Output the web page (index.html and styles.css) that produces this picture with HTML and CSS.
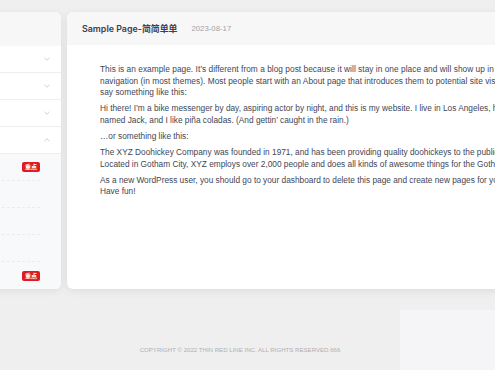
FILE: index.html
```html
<!DOCTYPE html>
<html lang="en">
<head>
<meta charset="utf-8">
<title>Sample Page</title>
<link rel="stylesheet" href="styles.css">
</head>
<body>
<div class="layout">
  <aside class="side">
    <div class="side-head"></div>
    <div class="menu-row"><svg class="chev" viewBox="0 0 6 4"><polyline points="0.5,0.8 3,3.2 5.5,0.8"/></svg></div>
    <div class="menu-row"><svg class="chev" viewBox="0 0 6 4"><polyline points="0.5,0.8 3,3.2 5.5,0.8"/></svg></div>
    <div class="menu-row"><svg class="chev" viewBox="0 0 6 4"><polyline points="0.5,0.8 3,3.2 5.5,0.8"/></svg></div>
    <div class="menu-row"><svg class="chev" viewBox="0 0 6 4"><polyline points="0.5,3.2 3,0.8 5.5,3.2"/></svg></div>
    <div class="submenu">
      <div class="sub-item"><span class="badge">重点</span></div>
      <div class="sub-item"></div>
      <div class="sub-item"></div>
      <div class="sub-item"></div>
      <div class="sub-item"><span class="badge">重点</span></div>
    </div>
  </aside>
  <main class="main">
    <div class="main-head">
      <h1 class="title">Sample Page-简简单单</h1>
      <span class="date">2023-08-17</span>
    </div>
    <div class="content">
      <p class="lead">This is an example page. It’s different from a blog post because it will stay in one place and will show up in your site navigation (in most themes). Most people start with an About page that introduces them to potential site visitors. It might say something like this:</p>
      <p>Hi there! I’m a bike messenger by day, aspiring actor by night, and this is my website. I live in Los Angeles, have a great dog named Jack, and I like piña coladas. (And gettin’ caught in the rain.)</p>
      <p>…or something like this:</p>
      <p>The XYZ Doohickey Company was founded in 1971, and has been providing quality doohickeys to the public ever since. Located in Gotham City, XYZ employs over 2,000 people and does all kinds of awesome things for the Gotham community.</p>
      <p>As a new WordPress user, you should go to your dashboard to delete this page and create new pages for your content. Have fun!</p>
    </div>
  </main>
</div>
<footer class="footer">COPYRIGHT © 2022 THIN RED LINE INC. ALL RIGHTS RESERVED.666</footer>
<div class="widget"></div>
</body>
</html>
```
FILE: styles.css
```css
html, body {
  margin: 0;
  padding: 0;
}
body {
  background: #efefef;
  font-family: "Liberation Sans", Arial, "Noto Sans CJK SC", sans-serif;
  overflow: hidden;
  height: 370px;
}
.layout {
  display: flex;
  justify-content: center;
  gap: 6px;
  padding-top: 12px;
}
.side {
  flex: 0 0 200px;
  width: 200px;
  background: #fff;
  border-radius: 6px;
  overflow: hidden;
  box-shadow: 0 2px 8px rgba(0, 0, 0, 0.07);
  display: flex;
  flex-direction: column;
}
.side-head {
  height: 34px;
  background: #f7f7f8;
}
.menu-row {
  height: 27px;
  box-sizing: border-box;
  border-bottom: 1px solid #eeeeee;
  display: flex;
  align-items: center;
  justify-content: flex-end;
  padding-right: 11px;
}
.chev {
  width: 6px;
  height: 4px;
  fill: none;
  stroke: #c4c4c4;
  stroke-width: 0.8;
}
.submenu {
  background: #f8f9fb;
  padding: 0 21px 0 0;
  flex: 1;
}
.sub-item {
  height: 27px;
  box-sizing: border-box;
  border-bottom: 1px dashed #ebecef;
  display: flex;
  align-items: center;
  justify-content: flex-end;
}
.sub-item:last-child {
  border-bottom: none;
}
.badge {
  background: #dc1c22;
  color: #fff;
  font-family: "Noto Sans CJK SC", sans-serif;
  font-size: 6px;
  font-weight: 700;
  line-height: 10px;
  height: 10px;
  padding: 0 3px;
  border-radius: 2px;
}
.main {
  flex: 0 0 567px;
  width: 567px;
  background: #fff;
  border-radius: 6px;
  overflow: hidden;
  box-shadow: 0 2px 8px rgba(0, 0, 0, 0.08);
}
.main-head {
  height: 33px;
  background: #f7f7f8;
  display: flex;
  align-items: center;
  padding-left: 15px;
  gap: 14px;
}
.title {
  margin: 0;
  font-family: Inter, "Noto Sans CJK SC", sans-serif;
  font-size: 8.9px;
  font-weight: 600;
  color: #3b4050;
}
.date {
  font-size: 7.8px;
  color: #a3a3a8;
}
.content {
  width: 456.5px;
  padding: 19px 0 0 33px;
  font-size: 8.3px;
  line-height: 11.6px;
  color: #414656;
}
.content p {
  margin: 0 0 4.5px;
}
.content .lead {
  letter-spacing: 0.04px;
}
.footer {
  text-align: center;
  padding: 57px 15px 0 0;
  font-size: 6.1px;
  color: #b0b0b0;
}
.widget {
  position: fixed;
  left: 400px;
  top: 310px;
  width: 120px;
  height: 80px;
  background: #f5f5f7;
}
```
